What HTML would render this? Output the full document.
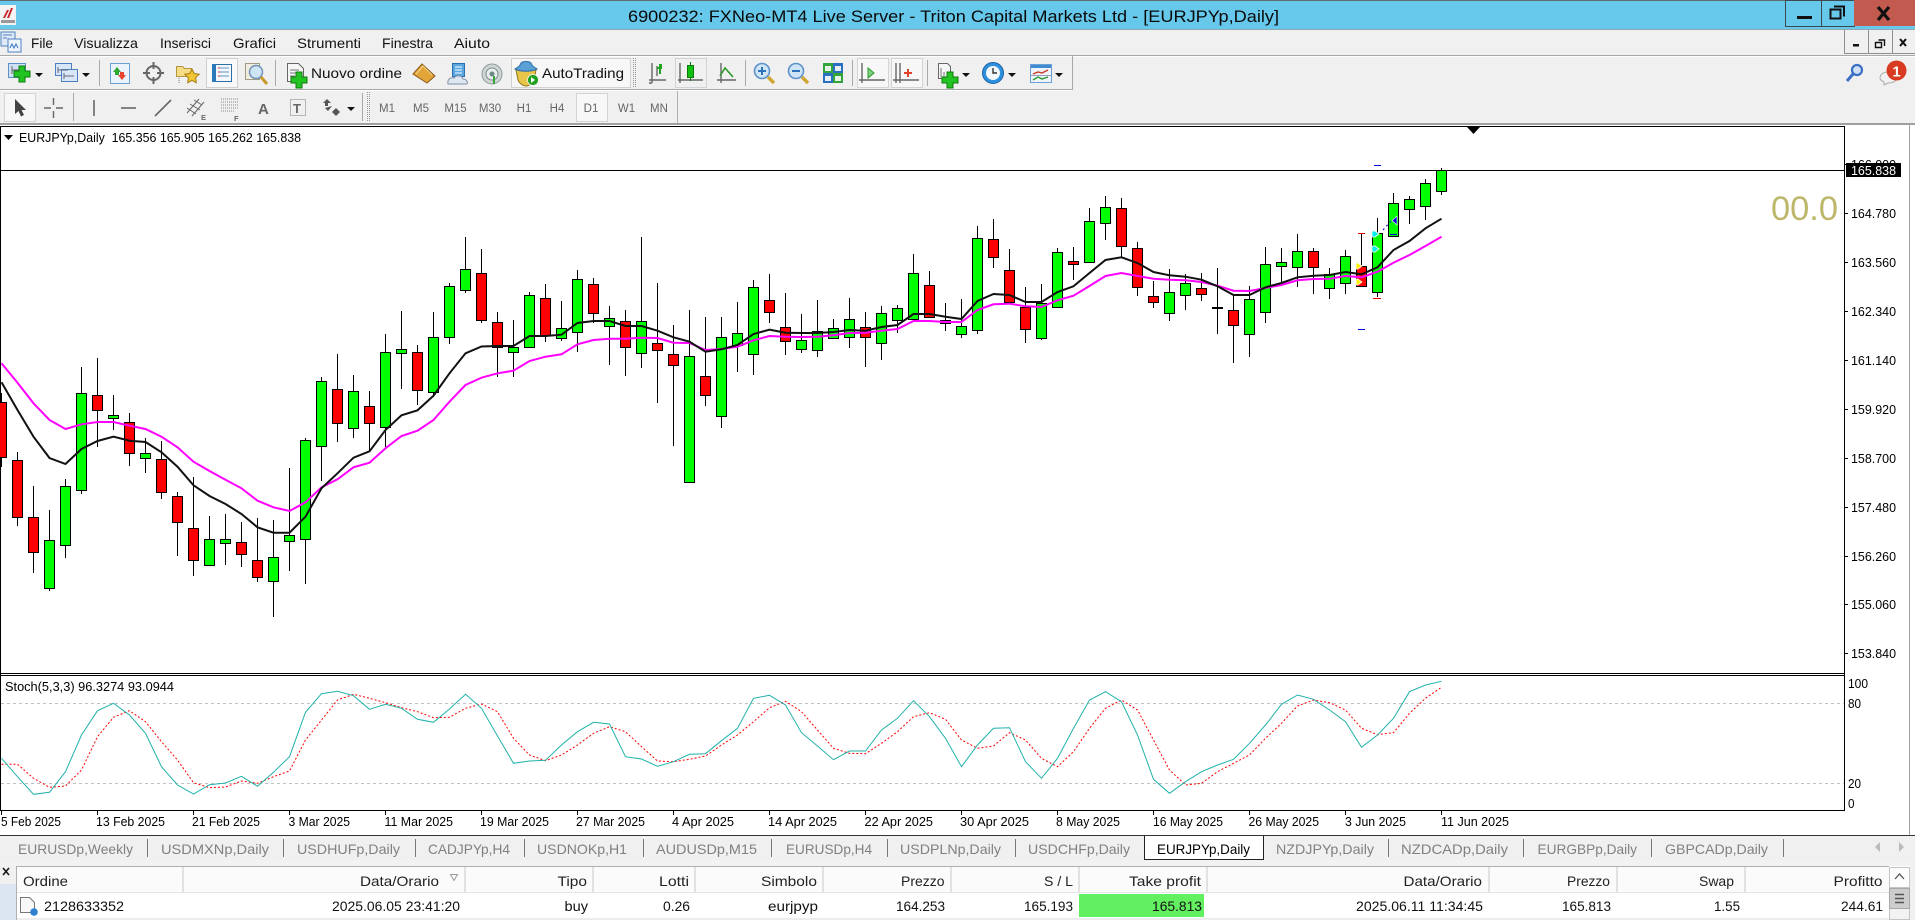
<!DOCTYPE html>
<html><head><meta charset="utf-8"><title>MT4</title>
<style>
html,body{margin:0;padding:0;background:#f0f0f0;overflow:hidden;width:1915px;height:920px}
svg{display:block;position:absolute;left:0;top:0}
text{font-family:"Liberation Sans",sans-serif;white-space:pre}
.m{font-size:14px;fill:#111}
.c{font-size:12.5px;fill:#000}
.t{font-size:14px;fill:#808080}
.f{font-size:11.5px;fill:#666}
.h{font-size:14px;fill:#222}
</style></head><body>
<svg width="1915" height="920" viewBox="0 0 1915 920" xmlns="http://www.w3.org/2000/svg">
<!-- title bar -->
<rect width="1915" height="920" fill="#f0f0f0"/>
<rect width="1915" height="30" fill="#66c9ec"/>
<rect width="1915" height="1" fill="#5f6b70"/>
<rect y="29" width="1915" height="1" fill="#8fa9b3"/>
<rect x="0" y="5" width="16" height="20" fill="#f4f4f4"/>
<path d="M3 18L7 10H9L5 18ZM7 18L11 8H13L9 18Z" fill="#c8242a"/><rect x="1" y="20" width="14" height="3" fill="#999"/>
<text x="628" y="22" font-size="17" fill="#0a0a0a" textLength="651" lengthAdjust="spacingAndGlyphs">6900232: FXNeo-MT4 Live Server - Triton Capital Markets Ltd - [EURJPYp,Daily]</text>
<rect x="1785.5" y="0.5" width="36" height="26" fill="#66c9ec" stroke="#3c4a50"/>
<rect x="1821.5" y="0.5" width="33" height="26" fill="#66c9ec" stroke="#3c4a50"/>
<rect x="1854" y="0" width="61" height="26" fill="#c25a50"/>
<rect x="1797" y="16" width="15" height="3" fill="#111"/>
<path d="M1834 6.5h10v10M1830.5 9.5h10v9h-10z" fill="none" stroke="#111" stroke-width="2"/>
<path d="M1878 7L1889 20M1889 7L1878 20" stroke="#111" stroke-width="3.2"/>
<!-- menu bar -->
<rect x="1" y="32" width="14" height="14" fill="#dfe9f7" stroke="#4d7fc0"/><rect x="8" y="39" width="13" height="13" fill="#eef4fb" stroke="#4d7fc0"/>
<path d="M10 48l2-4 2 4 2-4 2 4" fill="none" stroke="#3a78c4"/><path d="M3 35h9M3 38h4" stroke="#4d7fc0"/>
<text class="m" x="31" y="48" textLength="22" lengthAdjust="spacingAndGlyphs">File</text>
<text class="m" x="74" y="48" textLength="64" lengthAdjust="spacingAndGlyphs">Visualizza</text>
<text class="m" x="160" y="48" textLength="51" lengthAdjust="spacingAndGlyphs">Inserisci</text>
<text class="m" x="233" y="48" textLength="43" lengthAdjust="spacingAndGlyphs">Grafici</text>
<text class="m" x="297" y="48" textLength="64" lengthAdjust="spacingAndGlyphs">Strumenti</text>
<text class="m" x="382" y="48" textLength="51" lengthAdjust="spacingAndGlyphs">Finestra</text>
<text class="m" x="454" y="48" textLength="36" lengthAdjust="spacingAndGlyphs">Aiuto</text>
<rect x="0" y="55" width="1915" height="1" fill="#a8a8a8"/>
<rect x="0" y="56" width="1915" height="1" fill="#fff"/>
<path d="M1844.5 30V53.5H1915M1868.5 30V53.5M1892.5 30V53.5" fill="none" stroke="#8f8f8f"/>
<rect x="1853" y="44" width="6" height="2.5" fill="#111"/>
<path d="M1878.5 40h6v6M1875.5 42.5h6v5h-6z" fill="none" stroke="#111" stroke-width="1.4"/>
<path d="M1900 39L1906 46M1906 39L1900 46" stroke="#111" stroke-width="2"/>
<!-- toolbars frame -->
<path d="M0 89.5H1072.5V56" fill="none" stroke="#a8a8a8"/>
<rect x="0" y="90" width="1072" height="1" fill="#fff"/>
<rect x="0" y="123" width="1915" height="2" fill="#a0a0a0"/>
<rect x="0" y="125" width="1915" height="2" fill="#fff"/>
<!-- toolbar 1 icons -->
<g>
<rect x="8.5" y="63.5" width="17" height="14" fill="#cfe2f5" stroke="#5d8fc8"/><path d="M12 66v8M12 70h8" stroke="#666"/>
<path d="M19 69h6v5h5v6h-5v5h-6v-5h-5v-6h5z" fill="#22c422" stroke="#0d7d0d" transform="translate(0,-3)"/>
<path d="M35 73h8l-4 4z" fill="#111"/>
<rect x="55.5" y="63.5" width="16" height="12" fill="#d8e7f7" stroke="#4d7fc0"/><rect x="61.5" y="69.5" width="16" height="12" fill="#d8e7f7" stroke="#4d7fc0"/>
<path d="M58 67v6M58 70h10M64 73v6M64 76h10" stroke="#667"/>
<path d="M82 73h8l-4 4z" fill="#111"/>
<rect x="99" y="60" width="1" height="26" fill="#aaa"/>
<rect x="110.5" y="63.5" width="19" height="20" fill="#eaf3fb" stroke="#6aa0d4"/>
<path d="M113 72l4-5 4 5h-2v3h-4v-3z" fill="#2ea82e"/><path d="M118 75l4 5 4-5h-2v-3h-4v3z" fill="#e8452c"/>
<circle cx="153.5" cy="73" r="7" fill="none" stroke="#666" stroke-width="2"/>
<path d="M153.5 62v7M153.5 77v7M143 73h7M157 73h7" stroke="#666" stroke-width="2"/>
<path d="M176.5 66.5h6l2 2h7v8h-15z" fill="#f6dc85" stroke="#b59540"/><path d="M179 78v5" stroke="#777" stroke-dasharray="1 1"/>
<path d="M192 69l2.200 4.500 5 .7-3.600 3.500.8 5-4.400-2.300-4.400 2.300.8-5-3.600-3.500 5-.7z" fill="#f2c534" stroke="#a67e12"/>
<rect x="206.500" y="58.500" width="31" height="29" fill="#f9f9f9" stroke="#d0d0d0"/>
<rect x="212.500" y="64.500" width="19" height="17" fill="#f4f8fc" stroke="#2b6ea6"/><rect x="212" y="64" width="4" height="18" fill="#2b78b8"/>
<path d="M218 68h11M218 72h11M218 76h11" stroke="#5e93c6"/><path d="M218 68h2M218 72h2M218 76h2" stroke="#c33"/>
<rect x="245.500" y="63.500" width="14" height="16" fill="#f1ece0" stroke="#a39a85"/>
<circle cx="256" cy="72" r="6.500" fill="#cfe4f5" stroke="#6f93b5" stroke-width="1.500"/><path d="M261 77l6 7" stroke="#c79a2b" stroke-width="3"/>
<rect x="275" y="60" width="1" height="26" fill="#aaa"/>
<path d="M287.500 63.500h11l5 5v13h-16z" fill="#f6f6f6" stroke="#666"/><path d="M290 70h9M290 73h9M290 76h5" stroke="#777"/>
<path d="M296 72h6v5h5v6h-5v5h-6v-5h-5v-6h5z" fill="#22c422" stroke="#0d7d0d"/>
<text class="m" x="311" y="78" fill="#111" textLength="91" lengthAdjust="spacingAndGlyphs">Nuovo ordine</text>
<path d="M413 74l9-10 13 12-8 7z" fill="#e2a53a" stroke="#8a5a1a"/><path d="M416 74l7-8 9 9" fill="none" stroke="#f4d68a"/>
<rect x="452.500" y="63.500" width="12" height="13" fill="#5aa7e0" stroke="#2a6fb0"/><path d="M455 67h7M455 70h7M455 73h7" stroke="#fff"/>
<path d="M448 84c-1-5 3-7 6-6 2-3 8-3 9 1 4 0 6 5 3 5z" fill="#dfe8f2" stroke="#8090a5"/>
<circle cx="492" cy="74" r="10" fill="#cfd4d4" stroke="#8d9a9a"/><circle cx="492" cy="74" r="6" fill="#e9eded" stroke="#7c8c8c"/><circle cx="492" cy="74" r="2.500" fill="#6a8a8a"/><path d="M494 76v8" stroke="#3aa23a" stroke-width="2"/>
<rect x="511.500" y="58.500" width="119" height="29" fill="#f7f7f7" stroke="#d2d2d2"/>
<path d="M516 70l2 10c1 3 5 6 8 6s7-3 8-6l2-10z" fill="#e8c64a" stroke="#8f7419"/>
<path d="M515 69c3-2 5-3 6-6 2-2 8-2 10 0 1 3 3 4 6 6-6 3-16 3-22 0z" fill="#5a9fd6" stroke="#2e6ea5"/>
<circle cx="533" cy="80" r="5.500" fill="#1da01d" stroke="#f4f4f4" stroke-width=".8"/><path d="M531 77v6l4-3z" fill="#fff"/>
<text class="m" x="542" y="78" textLength="82" lengthAdjust="spacingAndGlyphs">AutoTrading</text>
<path d="M633.500 58V88M635.500 58V88" stroke="#999" stroke-dasharray="1 1"/>
<g fill="none" stroke="#666" stroke-width="1.400">
<path d="M652 63V83M649 80H666M649 83h3"/>
<path d="M680 63V83M678 80H703"/>
<path d="M721 63V83M717 80H736"/>
<path d="M657 66V76"/>
</g>
<rect x="675.500" y="58.500" width="31" height="29" fill="none" stroke="#d4d4d4"/>
<path d="M657 68h4v-4M660 64v10" fill="none" stroke="#1fa51f" stroke-width="2"/>
<rect x="687.500" y="65.500" width="6" height="12" fill="#10c010" stroke="#0b7a0b"/><path d="M690.500 62v3M690.500 78v3" stroke="#0b7a0b"/>
<path d="M720 76l5-8 8 9" fill="none" stroke="#2b9a2b" stroke-width="1.600"/>
<rect x="745" y="60" width="1" height="26" fill="#aaa"/>
<circle cx="762" cy="71" r="7.500" fill="#cfe4f7" stroke="#5d92c8" stroke-width="1.600"/><path d="M768 77l6 6" stroke="#d1a632" stroke-width="3.400"/><path d="M758 71h8M762 67v8" stroke="#2c71ba" stroke-width="2"/>
<circle cx="796" cy="71" r="7.500" fill="#cfe4f7" stroke="#5d92c8" stroke-width="1.600"/><path d="M802 77l6 6" stroke="#d1a632" stroke-width="3.400"/><path d="M792 71h8" stroke="#2c71ba" stroke-width="2"/>
<rect x="823" y="63" width="10" height="10" fill="#31a43a"/><rect x="833" y="63" width="10" height="10" fill="#2a6fc2"/><rect x="823" y="73" width="10" height="10" fill="#2a6fc2"/><rect x="833" y="73" width="10" height="10" fill="#31a43a"/>
<rect x="825" y="66" width="6" height="5" fill="#e6f4e6"/><rect x="835" y="66" width="6" height="5" fill="#e6eef8"/><rect x="825" y="76" width="6" height="5" fill="#e6eef8"/><rect x="835" y="76" width="6" height="5" fill="#e6f4e6"/>
<rect x="852" y="60" width="1" height="26" fill="#aaa"/>
<rect x="857.500" y="58.500" width="31" height="29" fill="#f7f7f7" stroke="#d4d4d4"/>
<path d="M862 63V83M859 80H885" fill="none" stroke="#666" stroke-width="1.400"/><path d="M868 68l6 5-6 5z" fill="#7ed27e" stroke="#2b9a2b"/>
<rect x="891.500" y="58.500" width="31" height="29" fill="#f7f7f7" stroke="#d4d4d4"/>
<path d="M896 63V83M900 63V83M893 80H919" fill="none" stroke="#666" stroke-width="1.400"/><path d="M904 73h8M908 69v8" stroke="#e0442c" stroke-width="2"/>
<rect x="927" y="60" width="1" height="26" fill="#aaa"/>
<path d="M938.500 63.500h9l3 3v12h-12z" fill="#f6f6f6" stroke="#666"/><path d="M941 68v9M944 72v5" stroke="#777"/>
<path d="M947 72h6v5h5v6h-5v5h-6v-5h-5v-6h5z" fill="#22c422" stroke="#0d7d0d"/>
<path d="M962 73h8l-4 4z" fill="#111"/>
<circle cx="993" cy="73" r="10.500" fill="#2e8fdc" stroke="#1d62a4"/><circle cx="993" cy="73" r="7" fill="#f4f8fb"/><path d="M993 68v5h4" fill="none" stroke="#333" stroke-width="1.400"/>
<path d="M1008 73h8l-4 4z" fill="#111"/>
<rect x="1030.500" y="64.500" width="21" height="18" fill="#eef4fa" stroke="#6aa0d4"/><rect x="1031" y="65" width="20" height="3" fill="#3f8ad0"/>
<path d="M1033 74l5-2 4 1 6-3" fill="none" stroke="#cc3a22" stroke-width="1.400"/><path d="M1033 80l5-3 4 2 6-2" fill="none" stroke="#2b9a2b" stroke-width="1.400"/><path d="M1031 75.500h20" stroke="#99b"/>
<path d="M1055 73h8l-4 4z" fill="#111"/>
</g>
<!-- right icons -->
<circle cx="1857" cy="70" r="5" fill="#cfe2f5" stroke="#3c6fc4" stroke-width="2.200"/><path d="M1853 74l-6 7" stroke="#3c6fc4" stroke-width="3"/>
<path d="M1880 78c0-4 4-6 8-6s8 2 8 6-4 5-8 5l-4 2v-3c-2-1-4-2-4-4z" fill="#f1f1f1" stroke="#aaa"/>
<circle cx="1896.500" cy="70.500" r="10" fill="#d83a22"/><text x="1896.500" y="76.500" text-anchor="middle" font-size="15" font-weight="bold" fill="#fff">1</text>
<!-- toolbar 2 -->
<rect x="4.500" y="93.500" width="31" height="28" fill="#f7f7f7" stroke="#d4d4d4"/>
<path d="M15 99V114L18.500 111L21 116.500L24 115L21.500 110H26Z" fill="#444"/>
<path d="M53.500 98V105M53.500 111V118M44 108H51M56 108H63" stroke="#666" stroke-width="1.400"/>
<rect x="73" y="93" width="1" height="28" fill="#aaa"/>
<path d="M94 100V116" stroke="#666" stroke-width="1.600"/>
<path d="M121 108H136" stroke="#666" stroke-width="1.600"/>
<path d="M155 116L171 100" stroke="#666" stroke-width="1.600"/>
<path d="M187 113L199 99M192 116L204 102M190 104l10 6M194 100l8 5M187 108l9 6" stroke="#666" fill="none"/>
<text x="201" y="120" font-size="7.500" font-weight="bold" fill="#666">E</text>
<path d="M221 99H238M221 102H238M221 105H238M221 108H238M221 111H234" stroke="#888" stroke-dasharray="1 1"/>
<text x="234" y="121" font-size="7.500" font-weight="bold" fill="#666">F</text>
<text x="258" y="114" font-size="15" font-weight="bold" fill="#666">A</text>
<rect x="290.500" y="99.500" width="15" height="16" fill="none" stroke="#777" stroke-dasharray="1 1"/>
<text x="293" y="113" font-size="13" font-weight="bold" fill="#666">T</text>
<path d="M327 99l4 4h-3v3h-3v-3h-2zM336 108l4 4-4 4-4-4zM325 108l3 3 4-5" fill="#555"/>
<path d="M347 107h8l-4 4z" fill="#111"/>
<rect x="362" y="93" width="1" height="28" fill="#aaa"/>
<path d="M367.500 92V122M369.500 92V122" stroke="#999" stroke-dasharray="1 1"/>
<rect x="576.500" y="93.500" width="31" height="28" fill="#f7f7f7" stroke="#d4d4d4"/>
<text class="f" x="387" y="112" text-anchor="middle">M1</text>
<text class="f" x="421" y="112" text-anchor="middle">M5</text>
<text class="f" x="455.500" y="112" text-anchor="middle">M15</text>
<text class="f" x="490" y="112" text-anchor="middle">M30</text>
<text class="f" x="524" y="112" text-anchor="middle">H1</text>
<text class="f" x="557" y="112" text-anchor="middle">H4</text>
<text class="f" x="591" y="112" text-anchor="middle">D1</text>
<text class="f" x="626.500" y="112" text-anchor="middle">W1</text>
<text class="f" x="659" y="112" text-anchor="middle">MN</text>
<rect x="677" y="91" width="1" height="32" fill="#b0b0b0"/>
<!-- chart -->
<rect x="0" y="127" width="1910" height="708" fill="#fff"/>
<rect x="1910" y="125" width="5" height="710" fill="#fff"/>
<rect x="1909" y="125" width="1" height="710" fill="#a0a0a0"/>
<rect x="0" y="126" width="1845" height="1" fill="#000"/>
<rect x="0" y="127" width="1" height="683" fill="#000"/>
<rect x="1844" y="127" width="1" height="683" fill="#000"/>
<rect x="0" y="673" width="1845" height="1" fill="#000"/>
<rect x="0" y="675" width="1845" height="1" fill="#000"/>
<rect x="0" y="810" width="1845" height="1" fill="#000"/>
<rect x="0" y="835" width="1915" height="1" fill="#333"/>
<path d="M1467 127H1480L1473.500 134Z" fill="#000"/>
<rect x="0" y="170" width="1845" height="1" fill="#000"/>
<path d="M4 135H13L8.500 140Z" fill="#000"/>
<text class="c" x="19" y="142" textLength="282" lengthAdjust="spacingAndGlyphs">EURJPYp,Daily  165.356 165.905 165.262 165.838</text>
<text x="1771" y="220" font-size="34" fill="#bdb76b" textLength="67" lengthAdjust="spacingAndGlyphs">00.0</text>
<g shape-rendering="crispEdges">
<path fill="none" stroke="#000" d="M1.500 393V467M17.500 452V526M33.500 486V573M49.500 510V591M65.500 479V558M81.500 367V494M97.500 358V447M113.500 395V430M129.500 413V466M145.500 438V473M161.500 441V499M177.500 492V556M193.500 477V576M209.500 516V565M225.500 514V565M241.500 522V567M257.500 518V582M273.500 520V617M289.500 468V571M305.500 438V584M321.500 377V481M337.500 354V442M353.500 375V438M369.500 391V450M385.500 334V447M401.500 311V389M417.500 345V405M433.500 312V397M449.500 283V344M465.500 237V293M481.500 249V323M497.500 312V377M513.500 320V377M529.500 292V347M545.500 284V342M561.500 301V341M577.500 270V352M593.500 278V323M609.500 306V365M625.500 310V376M641.500 237V368M657.500 283V403M673.500 325V446M689.500 310V483M705.500 317V406M721.500 317V428M737.500 302V372M753.500 280V375M769.500 274V323M785.500 293V355M801.500 314V353M817.500 300V357M833.500 319V339M849.500 298V348M865.500 312V367M881.500 306V360M897.500 305V333M913.500 254V319M929.500 271V317M945.500 303V331M961.500 299V338M977.500 226V334M993.500 219V268M1009.500 249V302M1025.500 287V343M1041.500 284V340M1057.500 248V307M1073.500 247V280M1089.500 208V262M1105.500 196V240M1121.500 198V257M1137.500 242V296M1153.500 281V308M1169.500 269V321M1185.500 274V310M1201.500 273V301M1217.500 268V334M1233.500 295V363M1249.500 286V357M1265.500 247V323M1281.500 248V283M1297.500 234V287M1313.500 248V294M1329.500 268V299M1345.500 250V294M1361.500 234V286M1377.500 218V297M1393.500 193V237M1409.500 196V224M1425.500 179V220M1441.500 168V195"/>
<path fill="#00ff00" stroke="#000" d="M44.500 540.500h10v48h-10zM60.500 486.500h10v59h-10zM76.500 393.500h10v97h-10zM108.500 415.500h10v3h-10zM140.500 453.500h10v5h-10zM204.500 539.500h10v26h-10zM220.500 539.500h10v4h-10zM268.500 557.500h10v24h-10zM284.500 535.500h10v6h-10zM300.500 440.500h10v99h-10zM316.500 381.500h10v65h-10zM348.500 391.500h10v37h-10zM380.500 352.500h10v75h-10zM396.500 349.500h10v4h-10zM428.500 337.500h10v55h-10zM444.500 286.500h10v51h-10zM460.500 269.500h10v21h-10zM508.500 347.500h10v5h-10zM524.500 295.500h10v52h-10zM556.500 328.500h10v10h-10zM572.500 279.500h10v53h-10zM604.500 318.500h10v8h-10zM636.500 321.500h10v32h-10zM684.500 356.500h10v126h-10zM716.500 337.500h10v79h-10zM732.500 333.500h10v12h-10zM748.500 287.500h10v67h-10zM796.500 340.500h10v9h-10zM812.500 331.500h10v19h-10zM828.500 328.500h10v10h-10zM844.500 319.500h10v18h-10zM876.500 313.500h10v30h-10zM892.500 308.500h10v12h-10zM908.500 273.500h10v46h-10zM956.500 326.500h10v8h-10zM972.500 238.500h10v92h-10zM1036.500 303.500h10v35h-10zM1052.500 252.500h10v55h-10zM1084.500 221.500h10v41h-10zM1100.500 207.500h10v16h-10zM1164.500 292.500h10v21h-10zM1180.500 283.500h10v12h-10zM1244.500 299.500h10v35h-10zM1260.500 264.500h10v48h-10zM1276.500 262.500h10v4h-10zM1292.500 251.500h10v16h-10zM1324.500 274.500h10v14h-10zM1340.500 256.500h10v27h-10zM1372.500 233.500h10v59h-10zM1388.500 203.500h10v33h-10zM1404.500 199.500h10v10h-10zM1420.500 183.500h10v23h-10zM1436.500 170.500h10v21h-10z"/>
<path fill="#ff0000" stroke="#000" d="M-3.500 402.500h10v55h-10zM12.500 460.500h10v57h-10zM28.500 517.500h10v35h-10zM92.500 395.500h10v15h-10zM124.500 422.500h10v31h-10zM156.500 459.500h10v33h-10zM172.500 496.500h10v26h-10zM188.500 528.500h10v32h-10zM236.500 542.500h10v12h-10zM252.500 560.500h10v17h-10zM332.500 389.500h10v34h-10zM364.500 406.500h10v17h-10zM412.500 352.500h10v38h-10zM476.500 273.500h10v47h-10zM492.500 322.500h10v25h-10zM540.500 298.500h10v37h-10zM588.500 284.500h10v29h-10zM620.500 321.500h10v26h-10zM652.500 343.500h10v7h-10zM668.500 354.500h10v11h-10zM700.500 376.500h10v19h-10zM764.500 300.500h10v12h-10zM780.500 327.500h10v14h-10zM860.500 327.500h10v10h-10zM924.500 285.500h10v32h-10zM940.500 320.500h10v3h-10zM988.500 239.500h10v18h-10zM1004.500 270.500h10v32h-10zM1020.500 307.500h10v22h-10zM1068.500 261.500h10v3h-10zM1116.500 208.500h10v38h-10zM1132.500 248.500h10v39h-10zM1148.500 296.500h10v6h-10zM1196.500 288.500h10v6h-10zM1228.500 310.500h10v15h-10zM1308.500 251.500h10v16h-10zM1356.500 266.500h10v20h-10z"/>
<rect x="1212" y="307" width="11" height="2" fill="#000"/>
</g>
<polyline fill="none" stroke="#ff00ff" stroke-width="2" points="1.500,363.300 17.500,382.700 33.500,403.300 49.500,420 65.500,429 81.500,424.300 97.500,422 113.500,422 129.500,425.700 145.500,429 161.500,436.700 177.500,447.300 193.500,461.700 209.500,471 225.500,479.700 241.500,488.300 257.500,500.700 273.500,507.300 289.500,511 305.500,502.300 321.500,487.300 337.500,479.300 353.500,467.300 369.500,462.700 385.500,448.300 401.500,436 417.500,430.700 433.500,420 449.500,401.700 465.500,385 481.500,377.700 497.500,373.300 513.500,370.700 529.500,361 545.500,356.700 561.500,354.300 577.500,344.300 593.500,340 609.500,338.700 625.500,338.700 641.500,337.700 657.500,338 673.500,342.700 689.500,343 705.500,350 721.500,349 737.500,346.700 753.500,340.300 769.500,336 785.500,336.700 801.500,337 817.500,336.700 833.500,335.300 849.500,333 865.500,332.700 881.500,330.700 897.500,329 913.500,321 929.500,321 945.500,322 961.500,322 977.500,310 993.500,304.300 1009.500,303.700 1025.500,306.300 1041.500,307 1057.500,300.300 1073.500,295.700 1089.500,286 1105.500,276 1121.500,273 1137.500,276 1153.500,278.700 1169.500,279.700 1185.500,280.300 1201.500,282 1217.500,285.700 1233.500,290.700 1249.500,291 1265.500,288 1281.500,285 1297.500,280.300 1313.500,279 1329.500,278.700 1345.500,276 1361.500,277.300 1377.500,271.700 1393.500,262.700 1409.500,255 1425.500,246 1441.500,236.700"/>
<polyline fill="none" stroke="#111" stroke-width="2" points="1.500,382.300 17.500,410 33.500,436.700 49.500,458 65.500,464 81.500,449 97.500,441 113.500,436.700 129.500,440.700 145.500,442 161.500,452.300 177.500,466.700 193.500,485.300 209.500,496 225.500,504 241.500,514 257.500,527.300 273.500,532.700 289.500,532.700 305.500,516.700 321.500,488.300 337.500,473.300 353.500,457.700 369.500,451.300 385.500,430 401.500,415.300 417.500,410.300 433.500,395.700 449.500,373.300 465.500,353.300 481.500,346.500 497.500,346 513.500,346 529.500,336 545.500,336 561.500,334.700 577.500,323 593.500,321 609.500,321 625.500,326 641.500,326 657.500,330.700 673.500,337.300 689.500,341.700 705.500,351.700 721.500,349.300 737.500,345 753.500,334 769.500,329.700 785.500,332.700 801.500,333 817.500,333 833.500,332 849.500,330 865.500,330.700 881.500,327 897.500,325 913.500,314 929.500,314 945.500,316.700 961.500,319 977.500,301 993.500,294 1009.500,295 1025.500,302 1041.500,302 1057.500,292 1073.500,286.300 1089.500,273 1105.500,260 1121.500,257.300 1137.500,263 1153.500,272 1169.500,275.300 1185.500,276.700 1201.500,279.700 1217.500,286.300 1233.500,295 1249.500,295 1265.500,287.300 1281.500,283 1297.500,277.300 1313.500,275.700 1329.500,275 1345.500,272 1361.500,274.300 1377.500,267.300 1393.500,250 1409.500,241 1425.500,228.300 1441.500,218.700"/>
<!-- markers -->
<g shape-rendering="crispEdges">
<rect x="1374" y="165" width="7" height="1" fill="#0000e0"/>
<rect x="1358" y="233" width="7" height="1" fill="#e00000"/>
<rect x="1373" y="298" width="8" height="1" fill="#e00000"/>
<rect x="1358" y="329" width="7" height="1" fill="#0000e0"/>
<rect x="1390" y="234" width="7" height="1" fill="#0000e0"/>
</g>
<path d="M1372 231h3l4 3-4 3h-3zM1372 246h3l4 3-4 3h-3z" fill="#00eeee" stroke="#fff" stroke-width=".8"/>
<path d="M1356 263h2l4 3-4 3h-2zM1356 279h2l4 3-4 3h-2z" fill="#ffee00" stroke="#fff" stroke-width=".8"/>
<path d="M1397 216V225L1392 220.500Z" fill="#0000e0" stroke="#fff" stroke-width=".6"/>
<path d="M1383 230L1391 221" stroke="#0000e0" stroke-dasharray="2 3"/>
<!-- price axis -->
<g class="axis">
<text class="c" x="1851" y="169" textLength="45" lengthAdjust="spacingAndGlyphs">166.000</text>
<text class="c" x="1851" y="218" textLength="45" lengthAdjust="spacingAndGlyphs">164.780</text>
<text class="c" x="1851" y="267" textLength="45" lengthAdjust="spacingAndGlyphs">163.560</text>
<text class="c" x="1851" y="316" textLength="45" lengthAdjust="spacingAndGlyphs">162.340</text>
<text class="c" x="1851" y="365" textLength="45" lengthAdjust="spacingAndGlyphs">161.140</text>
<text class="c" x="1851" y="414" textLength="45" lengthAdjust="spacingAndGlyphs">159.920</text>
<text class="c" x="1851" y="463" textLength="45" lengthAdjust="spacingAndGlyphs">158.700</text>
<text class="c" x="1851" y="512" textLength="45" lengthAdjust="spacingAndGlyphs">157.480</text>
<text class="c" x="1851" y="561" textLength="45" lengthAdjust="spacingAndGlyphs">156.260</text>
<text class="c" x="1851" y="609" textLength="45" lengthAdjust="spacingAndGlyphs">155.060</text>
<text class="c" x="1851" y="658" textLength="45" lengthAdjust="spacingAndGlyphs">153.840</text>
</g>
<path stroke="#000" d="M1845 164.500h3M1845 213.500h3M1845 262.500h3M1845 311.500h3M1845 360.500h3M1845 409.500h3M1845 458.500h3M1845 507.500h3M1845 556.500h3M1845 604.500h3M1845 653.500h3"/>
<rect x="1846" y="163" width="55" height="14" fill="#000"/>
<text x="1851" y="175" font-size="12.500" fill="#fff" textLength="45" lengthAdjust="spacingAndGlyphs">165.838</text>
<!-- stochastic -->
<text class="c" x="5" y="691" textLength="169" lengthAdjust="spacingAndGlyphs">Stoch(5,3,3) 96.3274 93.0944</text>
<path d="M1 703.500H1844M1 783.500H1844" stroke="#c0c0c0" stroke-dasharray="3 3"/>
<polyline fill="none" stroke="#ff0000" stroke-dasharray="2 2" points="1.500,764.300 17.500,764.300 33.500,778.300 49.500,787.300 65.500,786 81.500,770 97.500,736.700 113.500,717.300 129.500,710.700 145.500,721.700 161.500,741.700 177.500,760 193.500,782.700 209.500,787.700 225.500,787 241.500,781 257.500,783.300 273.500,776.700 289.500,771 305.500,740 321.500,720 337.500,700 353.500,694.300 369.500,698.300 385.500,702.700 401.500,707.700 417.500,711.700 433.500,717.700 449.500,717.300 465.500,708.300 481.500,704 497.500,711.700 513.500,738.300 529.500,755 545.500,760.700 561.500,755 577.500,745 593.500,733.300 609.500,726.700 625.500,731.700 641.500,746.700 657.500,761 673.500,761.700 689.500,759.300 705.500,756 721.500,745 737.500,735 753.500,721.700 769.500,707.700 785.500,701.300 801.500,711.700 817.500,730 833.500,748.300 849.500,753.300 865.500,753.700 881.500,743.300 897.500,731.700 913.500,716.700 929.500,712.700 945.500,719.300 961.500,740 977.500,748.300 993.500,746 1009.500,732.700 1025.500,740 1041.500,758.300 1057.500,766.700 1073.500,751.700 1089.500,728.300 1105.500,708.300 1121.500,700 1137.500,710 1153.500,740 1169.500,770 1185.500,785 1201.500,783.300 1217.500,771.700 1233.500,763.300 1249.500,755 1265.500,738.300 1281.500,723.300 1297.500,706 1313.500,700 1329.500,702.700 1345.500,710 1361.500,728.300 1377.500,734.700 1393.500,732.700 1409.500,713.300 1425.500,698.300 1441.500,687.300"/>
<polyline fill="none" stroke="#20b2aa" points="1.500,758.300 17.500,776.700 33.500,794.300 49.500,792.300 65.500,771.700 81.500,735 97.500,710.700 113.500,703.300 129.500,715 145.500,733.300 161.500,766.700 177.500,785 193.500,794 209.500,784.700 225.500,783 241.500,776.300 257.500,786.300 273.500,772.300 289.500,756.700 305.500,712.300 321.500,693.700 337.500,691.300 353.500,695.700 369.500,709.300 385.500,704.300 401.500,708.300 417.500,719.300 433.500,722.300 449.500,709 465.500,694.300 481.500,708.300 497.500,736 513.500,763.300 529.500,761 545.500,760.300 561.500,745 577.500,731.700 593.500,722.300 609.500,724 625.500,756.700 641.500,759 657.500,766.300 673.500,761.700 689.500,754.300 705.500,753.700 721.500,740.700 737.500,728.300 753.500,698.300 769.500,695.300 785.500,705 801.500,732.700 817.500,746 833.500,759.700 849.500,751 865.500,751 881.500,730 897.500,718.300 913.500,700.700 929.500,716.700 945.500,738.300 961.500,766.700 977.500,745 993.500,728.300 1009.500,727.700 1025.500,761.700 1041.500,778.300 1057.500,758.300 1073.500,728.300 1089.500,700 1105.500,691.700 1121.500,701.700 1137.500,735 1153.500,779.300 1169.500,793.300 1185.500,781.700 1201.500,771.700 1217.500,765 1233.500,759.300 1249.500,743.300 1265.500,725 1281.500,704.300 1297.500,695 1313.500,699.300 1329.500,710 1345.500,721.700 1361.500,747.300 1377.500,735 1393.500,718.300 1409.500,691.700 1425.500,685 1441.500,681.300"/>
<text class="c" x="1848" y="688" textLength="20" lengthAdjust="spacingAndGlyphs">100</text>
<text class="c" x="1848" y="708" textLength="13" lengthAdjust="spacingAndGlyphs">80</text>
<text class="c" x="1848" y="788" textLength="13" lengthAdjust="spacingAndGlyphs">20</text>
<text class="c" x="1848" y="808" textLength="6.500" lengthAdjust="spacingAndGlyphs">0</text>
<!-- time axis -->
<path stroke="#000" d="M1.500 811v4M97.500 811v4M193.500 811v4M289.500 811v4M385.500 811v4M481.500 811v4M577.500 811v4M673.500 811v4M769.500 811v4M865.500 811v4M961.500 811v4M1057.500 811v4M1153.500 811v4M1249.500 811v4M1345.500 811v4M1441.500 811v4"/>
<text class="c" x="1" y="826" textLength="60" lengthAdjust="spacingAndGlyphs">5 Feb 2025</text>
<text class="c" x="96" y="826" textLength="69" lengthAdjust="spacingAndGlyphs">13 Feb 2025</text>
<text class="c" x="192" y="826" textLength="68" lengthAdjust="spacingAndGlyphs">21 Feb 2025</text>
<text class="c" x="288.500" y="826" textLength="61.500" lengthAdjust="spacingAndGlyphs">3 Mar 2025</text>
<text class="c" x="384.500" y="826" textLength="68.500" lengthAdjust="spacingAndGlyphs">11 Mar 2025</text>
<text class="c" x="480" y="826" textLength="69" lengthAdjust="spacingAndGlyphs">19 Mar 2025</text>
<text class="c" x="576" y="826" textLength="69" lengthAdjust="spacingAndGlyphs">27 Mar 2025</text>
<text class="c" x="672" y="826" textLength="62" lengthAdjust="spacingAndGlyphs">4 Apr 2025</text>
<text class="c" x="768" y="826" textLength="69" lengthAdjust="spacingAndGlyphs">14 Apr 2025</text>
<text class="c" x="864.500" y="826" textLength="68.500" lengthAdjust="spacingAndGlyphs">22 Apr 2025</text>
<text class="c" x="960" y="826" textLength="69" lengthAdjust="spacingAndGlyphs">30 Apr 2025</text>
<text class="c" x="1056" y="826" textLength="64" lengthAdjust="spacingAndGlyphs">8 May 2025</text>
<text class="c" x="1153" y="826" textLength="70" lengthAdjust="spacingAndGlyphs">16 May 2025</text>
<text class="c" x="1248.500" y="826" textLength="70.500" lengthAdjust="spacingAndGlyphs">26 May 2025</text>
<text class="c" x="1345" y="826" textLength="61" lengthAdjust="spacingAndGlyphs">3 Jun 2025</text>
<text class="c" x="1441" y="826" textLength="68" lengthAdjust="spacingAndGlyphs">11 Jun 2025</text>
<!-- tabs -->
<rect x="0" y="836" width="1915" height="84" fill="#f0f0f0"/>
<rect x="0" y="860" width="1915" height="6" fill="#f2f2f2"/>
<path stroke="#777" d="M147.500 839v18M283.500 839v18M415.500 839v18M524.500 839v18M643.500 839v18M771.500 839v18M887.500 839v18M1015.500 839v18M1388.500 839v18M1523.500 839v18M1651.500 839v18M1783.500 839v18"/>
<path d="M1144.500 836V859.500H1263.500V836" fill="#fff" stroke="#222"/>
<text class="t" x="18" y="854" textLength="115" lengthAdjust="spacingAndGlyphs">EURUSDp,Weekly</text>
<text class="t" x="161" y="854" textLength="108" lengthAdjust="spacingAndGlyphs">USDMXNp,Daily</text>
<text class="t" x="297" y="854" textLength="103" lengthAdjust="spacingAndGlyphs">USDHUFp,Daily</text>
<text class="t" x="428" y="854" textLength="82" lengthAdjust="spacingAndGlyphs">CADJPYp,H4</text>
<text class="t" x="537" y="854" textLength="90" lengthAdjust="spacingAndGlyphs">USDNOKp,H1</text>
<text class="t" x="656" y="854" textLength="101" lengthAdjust="spacingAndGlyphs">AUDUSDp,M15</text>
<text class="t" x="786" y="854" textLength="86" lengthAdjust="spacingAndGlyphs">EURUSDp,H4</text>
<text class="t" x="900" y="854" textLength="101" lengthAdjust="spacingAndGlyphs">USDPLNp,Daily</text>
<text class="t" x="1028" y="854" textLength="102" lengthAdjust="spacingAndGlyphs">USDCHFp,Daily</text>
<text x="1157" y="854" font-size="14" fill="#000" textLength="93" lengthAdjust="spacingAndGlyphs">EURJPYp,Daily</text>
<text class="t" x="1276" y="854" textLength="98" lengthAdjust="spacingAndGlyphs">NZDJPYp,Daily</text>
<text class="t" x="1401" y="854" textLength="107" lengthAdjust="spacingAndGlyphs">NZDCADp,Daily</text>
<text class="t" x="1537.500" y="854" textLength="99.500" lengthAdjust="spacingAndGlyphs">EURGBPp,Daily</text>
<text class="t" x="1665" y="854" textLength="103" lengthAdjust="spacingAndGlyphs">GBPCADp,Daily</text>
<path d="M1880 842V852L1875 847ZM1899 842V852L1904 847Z" fill="#bbb"/>
<!-- terminal -->
<rect x="16" y="866" width="1894" height="54" fill="#fff"/>
<rect x="0" y="884" width="16" height="36" fill="#dbe6f2"/>
<path d="M3 868L9 875M9 868L3 875" stroke="#111" stroke-width="1.500"/>
<rect x="16" y="866" width="1873" height="1" fill="#b0b0b0"/>
<rect x="16" y="866" width="1" height="54" fill="#b0b0b0"/>
<rect x="17" y="867" width="1872" height="25" fill="#fbfbfb"/>
<rect x="17" y="892" width="1872" height="1" fill="#e4e4e4"/>
<path stroke="#e2e2e2" stroke-width="2" d="M183 867v25M465 867v25M593 867v25M695 867v25M823 867v25M951 867v25M1079 867v25M1207 867v25M1489 867v25M1617 867v25M1745 867v25"/>
<g class="hdr">
<text class="h" x="23" y="886" textLength="45" lengthAdjust="spacingAndGlyphs">Ordine</text>
<text class="h" x="360" y="886" textLength="79" lengthAdjust="spacingAndGlyphs">Data/Orario</text>
<path d="M450.500 874.500h7l-3.500 6z" fill="none" stroke="#999"/>
<text class="h" x="557.500" y="886" textLength="29.500" lengthAdjust="spacingAndGlyphs">Tipo</text>
<text class="h" x="659" y="886" textLength="30" lengthAdjust="spacingAndGlyphs">Lotti</text>
<text class="h" x="761" y="886" textLength="56" lengthAdjust="spacingAndGlyphs">Simbolo</text>
<text class="h" x="901" y="886" textLength="43.500" lengthAdjust="spacingAndGlyphs">Prezzo</text>
<text class="h" x="1044" y="886" textLength="29" lengthAdjust="spacingAndGlyphs">S / L</text>
<text class="h" x="1129" y="886" textLength="72" lengthAdjust="spacingAndGlyphs">Take profit</text>
<text class="h" x="1403.500" y="886" textLength="78.500" lengthAdjust="spacingAndGlyphs">Data/Orario</text>
<text class="h" x="1567" y="886" textLength="43" lengthAdjust="spacingAndGlyphs">Prezzo</text>
<text class="h" x="1699" y="886" textLength="35" lengthAdjust="spacingAndGlyphs">Swap</text>
<text class="h" x="1833.500" y="886" textLength="49" lengthAdjust="spacingAndGlyphs">Profitto</text>
</g>
<rect x="1079" y="894" width="125" height="23" fill="#62f060"/>
<path d="M20.500 897.500h9l5 5v10h-14z" fill="#f8f8f8" stroke="#777"/><circle cx="34" cy="912" r="3.800" fill="#2f80d0"/>
<g>
<text class="m" x="44" y="911" textLength="80" lengthAdjust="spacingAndGlyphs">2128633352</text>
<text class="m" x="332" y="911" textLength="128" lengthAdjust="spacingAndGlyphs">2025.06.05 23:41:20</text>
<text class="m" x="564.500" y="911" textLength="23.500" lengthAdjust="spacingAndGlyphs">buy</text>
<text class="m" x="663" y="911" textLength="27" lengthAdjust="spacingAndGlyphs">0.26</text>
<text class="m" x="768" y="911" textLength="50" lengthAdjust="spacingAndGlyphs">eurjpyp</text>
<text class="m" x="896" y="911" textLength="49" lengthAdjust="spacingAndGlyphs">164.253</text>
<text class="m" x="1024" y="911" textLength="49" lengthAdjust="spacingAndGlyphs">165.193</text>
<text class="m" x="1152" y="911" textLength="50" lengthAdjust="spacingAndGlyphs">165.813</text>
<text class="m" x="1356" y="911" textLength="127" lengthAdjust="spacingAndGlyphs">2025.06.11 11:34:45</text>
<text class="m" x="1562" y="911" textLength="49" lengthAdjust="spacingAndGlyphs">165.813</text>
<text class="m" x="1714" y="911" textLength="26" lengthAdjust="spacingAndGlyphs">1.55</text>
<text class="m" x="1841" y="911" textLength="42" lengthAdjust="spacingAndGlyphs">244.61</text>
</g>
<rect x="17" y="918" width="1872" height="2" fill="#ededed"/>
<!-- scrollbar -->
<rect x="1889.500" y="867.500" width="20" height="52" fill="#f2f2f2" stroke="#c4c4c4"/>
<rect x="1889.500" y="867.500" width="20" height="20" fill="#fcfcfc" stroke="#c4c4c4"/>
<path d="M1895 879L1899.500 874L1904 879" fill="none" stroke="#555" stroke-width="1.300"/>
<rect x="1889.500" y="888.500" width="20" height="20" fill="#cdcdcd" stroke="#a8a8a8"/>
<path d="M1895 894.500h9M1895 898.500h9M1895 902.500h9" stroke="#555" stroke-width="1.500"/>
<rect x="1910" y="860" width="5" height="60" fill="#f0f0f0"/>
</svg>
</body></html>
